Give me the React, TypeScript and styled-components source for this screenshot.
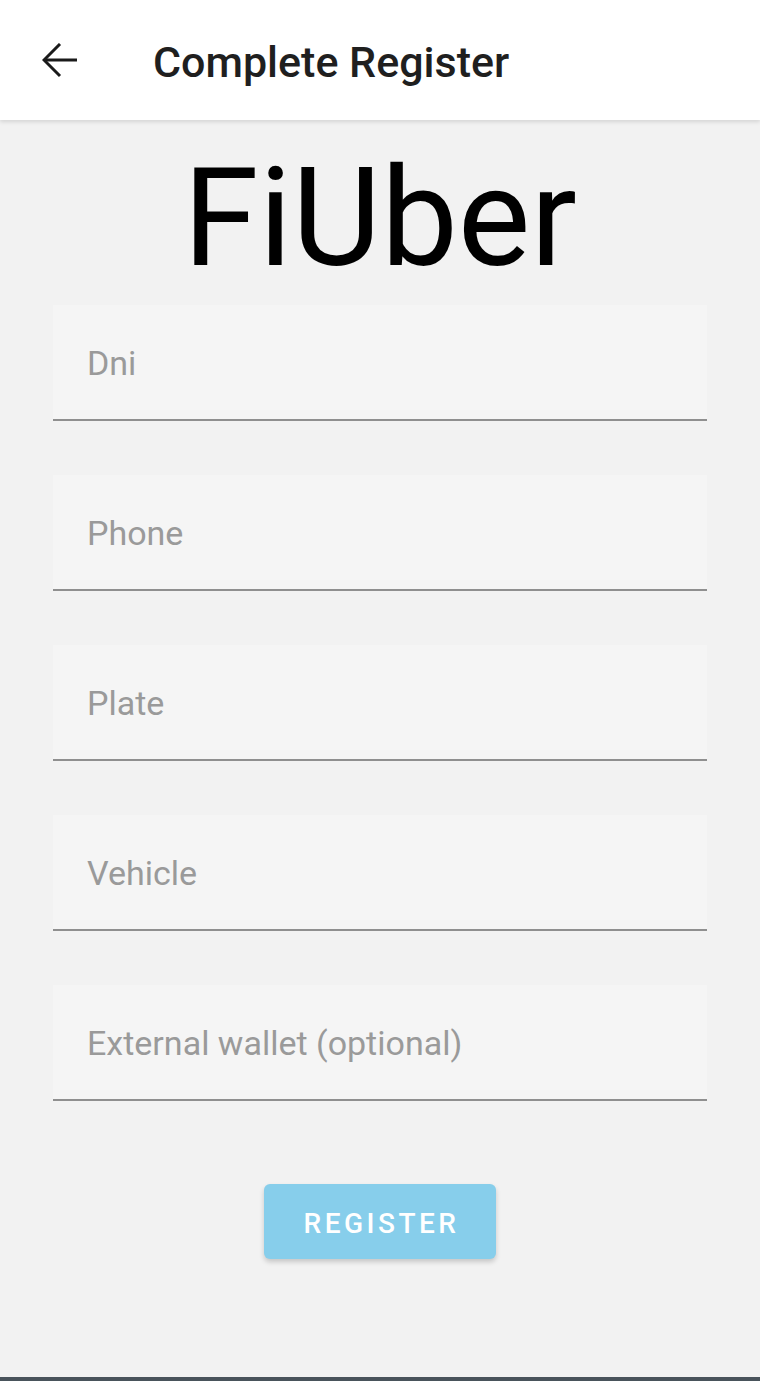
import React from "react";
import styled, { createGlobalStyle } from "styled-components";

const Global = createGlobalStyle`
  html, body { margin: 0; padding: 0; background: #f2f2f2; }
  body { font-family: Roboto, "Noto Sans", Arial, sans-serif; }
  * { box-sizing: border-box; }
`;

const Screen = styled.div`
  width: 760px;
  min-height: 1381px;
  display: flex;
  flex-direction: column;
  background: #f2f2f2;
`;

const Header = styled.header`
  height: 120px;
  background: #ffffff;
  display: flex;
  align-items: center;
  padding-left: 42px;
  gap: 75px;
  box-shadow: 0 2px 4px rgba(0, 0, 0, 0.12);
  position: relative;
  z-index: 1;
`;

const BackButton = styled.button`
  width: 36px;
  height: 36px;
  padding: 0;
  border: none;
  background: transparent;
  display: flex;
  align-items: center;
  justify-content: center;
  margin-top: 2px;
`;

const HeaderTitle = styled.h1`
  margin: 0;
  font-family: Roboto, sans-serif;
  font-weight: 500;
  font-size: 43px;
  color: #1f1f1f;
  margin-top: 4px;
`;

const Brand = styled.div`
  font-family: Roboto, sans-serif;
  font-weight: 400;
  font-size: 137px;
  line-height: 162px;
  text-align: center;
  color: #000;
  margin-top: 17px;
`;

const Form = styled.form`
  display: flex;
  flex-direction: column;
  gap: 54px;
  padding: 0 53px;
  margin-top: 6px;
`;

const Field = styled.div`
  height: 116px;
  background: #f5f5f5;
  border-bottom: 2px solid #8f8f8f;
  display: flex;
  align-items: center;
  padding-left: 34px;
  padding-top: 2px;
`;

const Placeholder = styled.span`
  font-family: Roboto, sans-serif;
  font-size: 34px;
  color: #9a9a9a;
`;

const ButtonRow = styled.div`
  display: flex;
  justify-content: center;
  margin-top: 83px;
`;

const RegisterButton = styled.button`
  width: 232px;
  height: 75px;
  border: none;
  border-radius: 6px;
  background: #87ceeb;
  color: #ffffff;
  font-family: Roboto, sans-serif;
  font-weight: 500;
  font-size: 28px;
  letter-spacing: 3.5px;
  box-shadow: 0 3px 5px rgba(0, 0, 0, 0.18);
  padding: 4px 0 0 3px;
`;

const BottomBar = styled.div`
  margin-top: auto;
  height: 4px;
  background: #49535b;
`;

const fields = ["Dni", "Phone", "Plate", "Vehicle", "External wallet (optional)"];

export default function App() {
  return (
    <>
      <Global />
      <Screen>
        <Header>
          <BackButton aria-label="back">
            <svg width="36" height="36" viewBox="0 0 36 36" fill="none">
              <path d="M2 17H35" stroke="#1a1a1a" strokeWidth="3" />
              <path d="M18 1L2 17L18 33" stroke="#1a1a1a" strokeWidth="3" strokeLinejoin="miter" />
            </svg>
          </BackButton>
          <HeaderTitle>Complete Register</HeaderTitle>
        </Header>
        <Brand>FiUber</Brand>
        <Form>
          {fields.map((f) => (
            <Field key={f}>
              <Placeholder>{f}</Placeholder>
            </Field>
          ))}
        </Form>
        <ButtonRow>
          <RegisterButton type="button">REGISTER</RegisterButton>
        </ButtonRow>
        <BottomBar />
      </Screen>
    </>
  );
}
